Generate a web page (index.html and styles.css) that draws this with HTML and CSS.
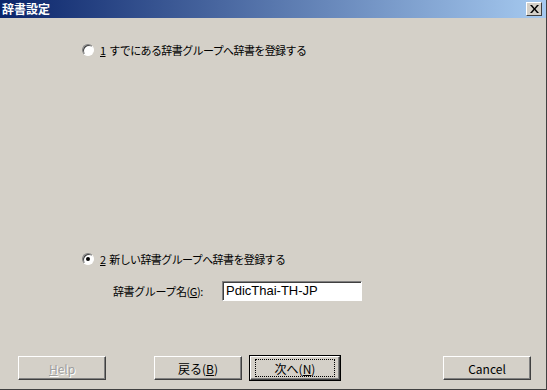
FILE: index.html
```html
<!DOCTYPE html>
<html lang="ja">
<head>
  <meta charset="UTF-8">
  <title>辞書設定</title>
  <link rel="stylesheet" href="styles.css">
</head>
<body>
  <div class="dialog">
    <div class="titlebar">
      <span class="title">辞書設定</span>
      <span class="close-btn">
        <svg width="9" height="8" viewBox="0 0 9 8"><path d="M0 0h2l2.5 3 2.5-3h2l-3.5 4 3.5 4h-2l-2.5-3-2.5 3h-2l3.5-4z" fill="#000"/></svg>
      </span>
    </div>

    <div class="content">
      <label class="radio-row first">
        <span class="radio"></span>
        <span><u>1</u>&nbsp; すでにある辞書グループへ辞書を登録する</span>
      </label>

      <label class="radio-row second">
        <span class="radio checked"></span>
        <span><u>2</u>&nbsp; 新しい辞書グループへ辞書を登録する</span>
      </label>

      <div class="field-row">
        <span class="field-label">辞書グループ名(<u>G</u>):</span>
        <span class="textbox">PdicThai-TH-JP</span>
      </div>
    </div>

    <div class="button-row">
      <span class="btn disabled"><u>H</u>elp</span>
      <span class="spacer-a"></span>
      <span class="btn">戻る(<u>B</u>)</span>
      <span class="btn default"><span class="focus">次へ(<u>N</u>)</span></span>
      <span class="spacer-b"></span>
      <span class="btn">Cancel</span>
    </div>
  </div>
</body>
</html>
```

FILE: styles.css
```css
html, body {
  margin: 0;
  padding: 0;
  background: #d4d0c8;
  font-family: "Noto Sans CJK JP", "Liberation Sans", sans-serif;
  font-size: 11px;
  color: #000;
}
.dialog {
  width: 547px;
  height: 390px;
  box-sizing: border-box;
  background: #d4d0c8;
  border-right: 1px solid #404040;
  border-bottom: 1px solid #404040;
  display: flex;
  flex-direction: column;
}
/* title bar */
.titlebar {
  height: 18px;
  background: linear-gradient(to right, #0a246a, #a6caf0);
  display: flex;
  align-items: center;
  justify-content: space-between;
  padding: 0 4px 0 2px;
}
.title {
  color: #fff;
  font-weight: bold;
  font-size: 12px;
  line-height: 18px;
}
.close-btn {
  width: 16px;
  height: 14px;
  box-sizing: border-box;
  background: #d4d0c8;
  border: 1px solid;
  border-color: #fff #404040 #404040 #fff;
  display: flex;
  align-items: center;
  justify-content: center;
}
/* main area */
.content {
  flex: 1;
  padding: 0 0 0 82px;
}
.radio-row {
  display: flex;
  align-items: center;
  gap: 6px;
  height: 16px;
  line-height: 16px;
  letter-spacing: -0.6px;
}
.radio-row.first {
  margin-top: 24px;
}
.radio-row.second {
  margin-top: 193px;
}
.radio {
  width: 12px;
  height: 12px;
  box-sizing: border-box;
  border-radius: 50%;
  background: #fff;
  border: 1px solid;
  border-color: #808080 #fff #fff #808080;
  box-shadow: inset 1px 1px 0 #404040;
  position: relative;
}
.radio.checked::after {
  content: "";
  position: absolute;
  left: 3px;
  top: 3px;
  width: 4px;
  height: 4px;
  border-radius: 50%;
  background: #000;
}
.field-row {
  display: flex;
  align-items: center;
  margin: 14px 0 0 31px;
}
.field-label {
  width: 109px;
  letter-spacing: -0.4px;
}
.textbox {
  width: 140px;
  height: 20px;
  box-sizing: border-box;
  background: #fff;
  border: 1px solid;
  border-color: #808080 #fff #fff #808080;
  box-shadow: inset 1px 1px 0 #404040;
  padding: 0 3px;
  line-height: 18px;
  font-family: "Liberation Sans", sans-serif;
  font-size: 13px;
}
/* buttons */
.button-row {
  display: flex;
  padding: 0 0 9px 18px;
  font-size: 12px;
}
.btn {
  width: 88px;
  height: 24px;
  box-sizing: border-box;
  border: 1px solid;
  border-color: #fff #404040 #404040 #fff;
  box-shadow: inset -1px -1px 0 #808080;
  display: flex;
  align-items: center;
  justify-content: center;
  margin-right: 8px;
}
.btn.disabled {
  color: #a0a0a0;
  text-shadow: 1px 1px 0 #fff;
}
.btn.default {
  width: 90px;
  outline: 1px solid #000;
}
.focus {
  width: 78px;
  height: 16px;
  border: 1px dotted #000;
  display: flex;
  align-items: center;
  justify-content: center;
}
.spacer-a {
  width: 40px;
}
.spacer-b {
  width: 95px;
}
```
